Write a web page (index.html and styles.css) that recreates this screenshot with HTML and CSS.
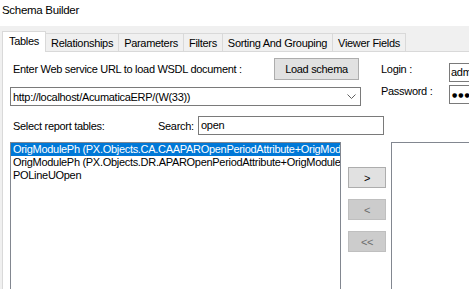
FILE: index.html
```html
<!DOCTYPE html>
<html lang="en">
<head>
  <meta charset="UTF-8" />
  <title>Schema Builder</title>
  <link rel="stylesheet" href="styles.css">
</head>
<body>

  <div class="title">Schema Builder</div>

  <div class="tabctl">
    <div class="tabs">
      <div class="tab active">Tables</div>
      <div class="tab">Relationships</div>
      <div class="tab">Parameters</div>
      <div class="tab">Filters</div>
      <div class="tab">Sorting And Grouping</div>
      <div class="tab">Viewer Fields</div>
    </div>

    <div class="page">
      <div class="top">
        <div class="conn">
          <div class="row1">
            <span class="lbl">Enter Web service URL to load WSDL document :</span>
            <button class="btn">Load schema</button>
          </div>
          <div class="combo">
            <span>http://localhost/AcumaticaERP/(W(33))</span>
            <svg width="9" height="5" viewBox="0 0 9 5"><polyline points="0.5,0.5 4.5,4.5 8.5,0.5" fill="none" stroke="#606060" stroke-width="1"/></svg>
          </div>
        </div>
        <div class="creds">
          <div class="cred">
            <span class="lbl">Login :</span>
            <div class="field edge">adm</div>
          </div>
          <div class="cred">
            <span class="lbl">Password :</span>
            <div class="field edge dots">●●●</div>
          </div>
        </div>
      </div>

      <div class="search-row">
        <span class="lbl">Select report tables:</span>
        <span class="search-lbl">Search:</span>
        <div class="field search">open</div>
      </div>

      <div class="lists">
        <div class="listbox tables">
          <div class="item selected">OrigModulePh (PX.Objects.CA.CAAPAROpenPeriodAttribute+OrigModulePh)</div>
          <div class="item">OrigModulePh (PX.Objects.DR.APAROpenPeriodAttribute+OrigModulePh)</div>
          <div class="item">POLineUOpen</div>
        </div>
        <div class="movers">
          <button class="btn mover">&gt;</button>
          <button class="btn mover" disabled>&lt;</button>
          <button class="btn mover" disabled>&lt;&lt;</button>
        </div>
        <div class="listbox chosen"></div>
      </div>
    </div>
  </div>

</body>
</html>
```

FILE: styles.css
```css
body {
  margin: 0;
  width: 469px;
  height: 289px;
  overflow: hidden;
  font-family: "Liberation Sans", Arial, sans-serif;
  font-size: 11px;
  letter-spacing: -0.3px;
  color: #000;
  background: #fff;
}

.title {
  height: 26px;
  line-height: 20px;
  padding-left: 2px;
  font-size: 11.5px;
}

.tabctl {
  background: #f0f0f0;
  padding: 5px 0 0 2px;
  height: 263px;
  box-sizing: border-box;
  display: flex;
  flex-direction: column;
}

.tabs {
  display: flex;
  align-items: flex-end;
}

.tab {
  height: 17px;
  line-height: 18px;
  padding: 0 5px;
  margin-left: -1px;
  border: 1px solid #d9d9d9;
  border-bottom: none;
  background: #f0f0f0;
  white-space: nowrap;
  flex-shrink: 0;
}

.tab.active {
  height: 20px;
  line-height: 19px;
  padding: 0 6px;
  margin-left: 0;
  margin-bottom: -1px;
  background: #fff;
  position: relative;
}

.page {
  flex: 1;
  background: #fff;
  border-top: 1px solid #d9d9d9;
  border-left: 1px solid #d9d9d9;
  padding: 6px 0 0 7px;
}

.top {
  display: flex;
  gap: 20px;
}

.conn {
  width: 351px;
  flex-shrink: 0;
}

.row1 {
  display: flex;
  align-items: center;
  height: 22px;
}

.row1 .lbl {
  flex: 1;
  padding-left: 3px;
  white-space: nowrap;
}

.btn {
  font: inherit;
  letter-spacing: inherit;
  color: #000;
  padding: 0;
  background: #e1e1e1;
  border: 1px solid #adadad;
  box-sizing: border-box;
}

.row1 .btn {
  width: 85px;
  height: 22px;
  margin-right: 2px;
  flex-shrink: 0;
}

.combo {
  margin-top: 7px;
  height: 19px;
  box-sizing: border-box;
  border: 1px solid #7a7a7a;
  display: flex;
  align-items: center;
  justify-content: space-between;
  padding: 0 4px 0 2px;
}

.creds {
  padding-top: 5px;
  display: flex;
  flex-direction: column;
  gap: 3px;
  flex-shrink: 0;
}

.cred {
  display: flex;
  align-items: flex-start;
}

.cred .lbl {
  width: 68px;
  line-height: 13px;
  flex-shrink: 0;
}

.field {
  height: 19px;
  box-sizing: border-box;
  border: 1px solid #7a7a7a;
  width: 40px;
  padding-left: 2px;
  line-height: 17px;
  white-space: nowrap;
  overflow: hidden;
  flex-shrink: 0;
}

.field.edge {
  width: 20px;
  border-right: none;
  padding-left: 1px;
}

.field.dots {
  font-family: "DejaVu Sans", sans-serif;
  font-size: 6px;
  letter-spacing: 1px;
  padding-left: 2px;
}

.search-row {
  display: flex;
  align-items: center;
  margin-top: 10px;
  height: 19px;
}

.search-row .lbl {
  width: 145px;
  padding-left: 3px;
  flex-shrink: 0;
}

.search-lbl {
  width: 40px;
  flex-shrink: 0;
}

.field.search {
  width: 186px;
}

.lists {
  display: flex;
  align-items: flex-start;
  margin-top: 7px;
}

.listbox {
  height: 150px;
  box-sizing: border-box;
  border: 1px solid #828790;
  border-bottom: none;
  overflow: hidden;
  flex-shrink: 0;
}

.listbox.tables {
  width: 331px;
}

.item {
  height: 13px;
  line-height: 13px;
  padding-left: 2px;
  white-space: nowrap;
  overflow: hidden;
}

.item.selected {
  background: #0078d7;
  color: #fff;
}

.movers {
  margin-left: 7px;
  padding-top: 25px;
  display: flex;
  flex-direction: column;
  gap: 11px;
  flex-shrink: 0;
}

.btn.mover {
  width: 38px;
  height: 21px;
}

.btn.mover:disabled {
  background: #cccccc;
  border-color: #bfbfbf;
  color: #6d6d6d;
}

.listbox.chosen {
  margin-left: 5px;
  width: 78px;
  border-right: none;
}
```
